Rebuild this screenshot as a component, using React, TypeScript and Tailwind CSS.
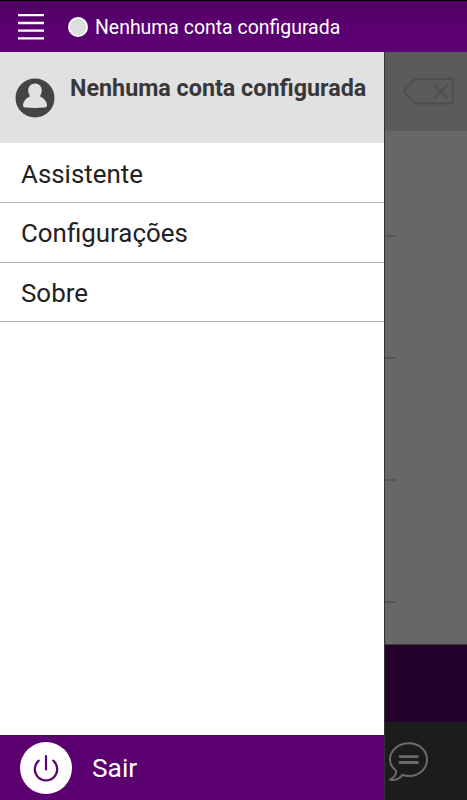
const menuItems = ["Assistente", "Configurações", "Sobre"];

function StatusBar() {
  return (
    <header className="flex h-[52px] shrink-0 items-center border-t border-black bg-linear-to-b from-[#500063] to-[#5a0070] to-50%">
      <button className="ml-[18px] pt-px" aria-label="Menu">
        <svg
          className="h-7 w-[26px]"
          viewBox="0 0 26 28"
          stroke="#fff"
          strokeWidth="2.3"
        >
          <path d="M0 2.200h26M0 10h26M0 17.600h26M0 25.400h26" />
        </svg>
      </button>
      <span className="ml-6 h-5 w-5 rounded-full border-2 border-white bg-[#dedede]" />
      <span className="ml-[7px] whitespace-nowrap pt-[3px] text-[19.45px] leading-6 text-white">
        Nenhuma conta configurada
      </span>
    </header>
  );
}

function Avatar() {
  return (
    <svg className="h-10 w-10 shrink-0" viewBox="0 0 40 40">
      <circle cx="20" cy="20" r="19.5" fill="#444444" />
      <path
        fill="#e1e1e1"
        d="M20 5.500c4 0 6.800 3 6.800 7 0 2.200-.8 4.200-2 5.700 4.400 1.900 7.200 5.500 7.200 9.400 0 1.300-1 1.900-2.400 2-6.100.6-13.100.6-19.200 0-1.400-.1-2.400-.7-2.400-2 0-3.900 2.800-7.500 7.200-9.400-1.200-1.500-2-3.500-2-5.700 0-4 2.800-7 6.800-7z"
      />
    </svg>
  );
}

function SideMenu() {
  return (
    <aside className="flex w-[384px] shrink-0 flex-col bg-white">
      <div className="flex h-[91.4px] bg-[#e1e1e1] pl-[15px] pt-[26px]">
        <Avatar />
        <h2 className="-mt-[5px] ml-[15px] whitespace-nowrap text-[23.3px] font-bold leading-[30px] text-[#383838]">
          Nenhuma conta configurada
        </h2>
      </div>
      <ul>
        {menuItems.map((item) => (
          <li
            key={item}
            className="flex h-[59.7px] items-center border-b border-[#b5b5b5] pl-[21px] pt-[3px] text-[25.9px] text-[#222222]"
          >
            {item}
          </li>
        ))}
      </ul>
      <button className="mt-auto flex h-[65px] items-center bg-[#5a0070] pl-5">
        <svg className="h-[52px] w-[52px]" viewBox="0 0 52 52" fill="none">
          <circle cx="26" cy="26" r="26" fill="#fff" />
          <g stroke="#5a0070" strokeWidth="2.2" strokeLinecap="round">
            <path d="M26 14v13.500" />
            <path d="M18.700 18.700a11.200 11.200 0 1 0 14.600 0" />
          </g>
        </svg>
        <span className="ml-5 pt-[3px] text-[26.3px] text-white">Sair</span>
      </button>
    </aside>
  );
}

function DialerBackground() {
  return (
    <main className="flex flex-1 flex-col border-l border-[#333333] bg-[#676767]">
      <div className="flex h-[78.5px] shrink-0 bg-[#5b5b5b] pl-[17px] pt-[25px]">
        <svg
          className="h-[29px] w-[53px]"
          viewBox="0 0 53 29"
          fill="none"
          stroke="#4f4f4f"
          strokeWidth="2"
        >
          <path d="M13 2H51V26.500H13L1.500 14.300z" />
          <path d="M31.500 7.300l14.500 14.500M46 7.300L31.500 21.800" />
        </svg>
      </div>
      {/* row separators of the keypad */}
      <div className="flex flex-1 flex-col gap-[120px] pt-[104.5px]">
        <span className="h-[2px] w-[11px] bg-[#555555]" />
        <span className="h-[2px] w-[11px] bg-[#555555]" />
        <span className="h-[2px] w-[11px] bg-[#555555]" />
        <span className="h-[2px] w-[11px] bg-[#555555]" />
      </div>
      <div className="h-[78px] shrink-0 border-t border-[#3c3c3c] bg-[#24002d]" />
      <div className="h-[78px] shrink-0 bg-[#1c1c1c] pl-1 pt-5">
        <svg
          className="h-[40px] w-[40px]"
          viewBox="0 0 40 40"
          fill="none"
          stroke="#6b6b6b"
          strokeWidth="2"
          strokeLinecap="round"
          strokeLinejoin="round"
        >
          <path d="M7 28.500C3 25.500 1 21.800 1 17.600 1 8.500 9.300 1.200 19.800 1.200s18.200 7.300 18.200 16.400S30.300 34 19.800 34c-2.300 0-4.400-.4-6.300-1.200C10.500 36.800 6 38.800 1 37.800c4-2.300 6.500-5.800 6-9.300z" />
          <path strokeWidth="2.800" strokeLinecap="butt" d="M10 14.700h19.500M10 20.500h19.500" />
        </svg>
      </div>
    </main>
  );
}

export default function App() {
  return (
    <div className="flex h-[800px] w-[467px] flex-col overflow-hidden font-[Roboto,sans-serif]">
      <StatusBar />
      <div className="flex flex-1">
        <SideMenu />
        <DialerBackground />
      </div>
    </div>
  );
}
